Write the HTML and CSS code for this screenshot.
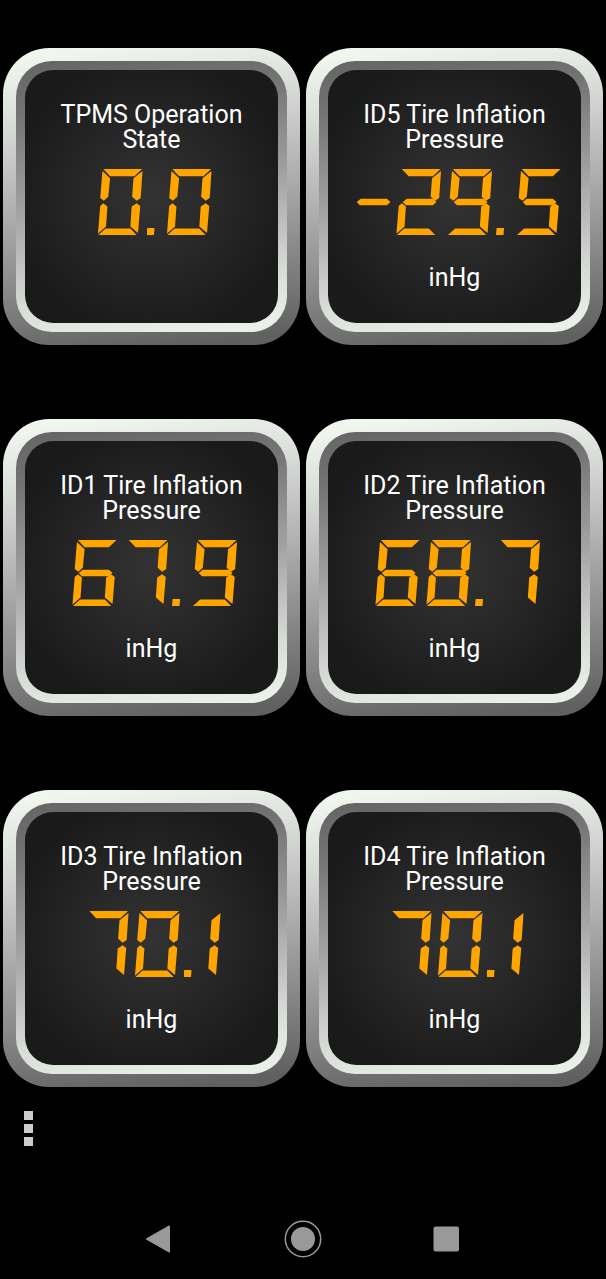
FILE: index.html
```
<!DOCTYPE html>
<html lang="en">
<head>
<meta charset="utf-8">
<meta name="viewport" content="width=device-width, initial-scale=1">
<title>Tire pressure</title>
<link rel="stylesheet" href="styles.css">
</head>
<body>
<main class="dashboard">
  <section class="gauge"><div class="ring"><div class="face">
    <h2 class="title">TPMS Operation State</h2>
    <div class="readout" data-value="0.0"></div>
  </div></div></section>
  <section class="gauge"><div class="ring"><div class="face">
    <h2 class="title">ID5 Tire Inflation Pressure</h2>
    <div class="readout" data-value="-29.5"></div>
    <p class="unit">inHg</p>
  </div></div></section>
  <section class="gauge"><div class="ring"><div class="face">
    <h2 class="title">ID1 Tire Inflation Pressure</h2>
    <div class="readout" data-value="67.9"></div>
    <p class="unit">inHg</p>
  </div></div></section>
  <section class="gauge"><div class="ring"><div class="face">
    <h2 class="title">ID2 Tire Inflation Pressure</h2>
    <div class="readout" data-value="68.7"></div>
    <p class="unit">inHg</p>
  </div></div></section>
  <section class="gauge"><div class="ring"><div class="face">
    <h2 class="title">ID3 Tire Inflation Pressure</h2>
    <div class="readout" data-value="70.1"></div>
    <p class="unit">inHg</p>
  </div></div></section>
  <section class="gauge"><div class="ring"><div class="face">
    <h2 class="title">ID4 Tire Inflation Pressure</h2>
    <div class="readout" data-value="70.1"></div>
    <p class="unit">inHg</p>
  </div></div></section>
</main>
<div class="toolbar">
  <button class="menu" type="button" aria-label="Menu"><span class="dot"></span><span class="dot"></span><span class="dot"></span></button>
</div>
<nav class="navbar" aria-label="System">
  <button class="nav-button" type="button" aria-label="Back">
    <svg width="40" height="40" viewBox="0 0 40 40"><path d="M8 20 30 7.500V32.500Z" fill="#999" stroke="#999" stroke-width="2" stroke-linejoin="round"/></svg>
  </button>
  <button class="nav-button" type="button" aria-label="Home">
    <svg width="40" height="40" viewBox="0 0 40 40"><circle cx="20" cy="20" r="17.700" fill="none" stroke="#999" stroke-width="1.500"/><circle cx="20" cy="20" r="12" fill="#999"/></svg>
  </button>
  <button class="nav-button" type="button" aria-label="Recent apps">
    <svg width="40" height="40" viewBox="0 0 40 40"><rect x="6.500" y="7.500" width="25.500" height="25" rx="2" fill="#999"/></svg>
  </button>
</nav>
<script src="display.js"></script>
</body>
</html>
```
FILE: styles.css
```
* { box-sizing: border-box; }

body {
  margin: 0;
  min-height: 100vh;
  display: flex;
  flex-direction: column;
  background: #000;
  color: #fff;
  font-family: Roboto, "Liberation Sans", sans-serif;
}

button {
  border: 0;
  background: none;
  cursor: pointer;
}

.dashboard {
  display: grid;
  grid-template-columns: 1fr 1fr;
  gap: 74px 6px;
  padding: 48px 3px 0;
}

/* Metal bezel, inner bevel and dark face */
.gauge {
  display: flex;
  aspect-ratio: 1;
  padding: 13px;
  border-radius: 46px;
  background: linear-gradient(172deg, #f0f5ee 4%, #dde1dc 20%, #a6a6a6 54%, #606060 96%);
}

.ring {
  flex: 1;
  display: flex;
  padding: 9px;
  border-radius: 36px;
  background: linear-gradient(172deg, #666 2%, #747474 18%, #a4a4a4 50%, #d8dcd7 80%, #eaf0e9 96%);
}

.face {
  flex: 1;
  display: flex;
  flex-direction: column;
  align-items: center;
  padding-top: 32px;
  border-radius: 28px;
  background: radial-gradient(circle closest-side, #333 0%, #272727 55%, #1a1a1a 110%);
}

.title {
  margin: 0;
  max-width: 200px;
  font-size: 25px;
  font-weight: 400;
  line-height: 25px;
  text-align: center;
}

/* Seven-segment display */
.readout {
  display: flex;
  justify-content: center;
  height: 66px;
  margin-top: 17px;
}

.digit {
  display: grid;
  flex: none;
  grid-template-columns: 45px;
  width: 51px;
  padding-left: 6px;
}

.digit-minus { width: 42px; padding-left: 2px; }
.digit-1 { width: 28px; padding: 0 5px 0 0; justify-content: end; }

.segment {
  grid-area: 1 / 1;
  height: 66px;
  background: #ffa500;
}

.segment-a { clip-path: polygon(13% 0, 99% 0, 82% 11%, 28% 11%); }
.segment-b { clip-path: polygon(100% 3%, 96% 44%, 87% 48%, 77% 42%, 80% 14%); }
.segment-c { clip-path: polygon(87% 52%, 95% 56%, 90% 97%, 73% 87%, 76% 57%); }
.segment-d { clip-path: polygon(18% 90%, 73% 90%, 87% 100%, 2% 100%); }
.segment-e { clip-path: polygon(6% 56%, 13% 52%, 22% 57%, 19% 87%, 1% 98%); }
.segment-f { clip-path: polygon(11% 3%, 28% 14%, 24% 42%, 14% 48%, 6% 44%); }
.segment-g { clip-path: polygon(15% 50%, 24% 45%, 82% 45%, 90% 50%, 82% 55%, 22% 55%); }

.point {
  align-self: flex-end;
  width: 8px;
  height: 7px;
  margin: 0 6px 0 4px;
  background: #ffa500;
  clip-path: polygon(8% 0, 100% 0, 94% 100%, 0 100%);
}

.unit {
  margin: 27px 0 0;
  font-size: 25px;
  line-height: 32px;
}

.toolbar {
  padding: 16px 16px 0;
}

.menu {
  display: flex;
  flex-direction: column;
  gap: 4px;
  padding: 8px;
}

.dot {
  width: 9px;
  height: 9px;
  background: #ccc;
}

.navbar {
  display: flex;
  justify-content: center;
  gap: 104px;
  margin-top: auto;
  padding-bottom: 20px;
}

.nav-button {
  display: flex;
  padding: 0;
}
```
FILE: display.js
```
// Lit segments for each character of a readout
const SEGMENTS = {
  "0": "abcdef", "1": "bc", "2": "abdeg", "3": "abcdg", "4": "bcfg",
  "5": "acdfg", "6": "acdefg", "7": "abc", "8": "abcdefg", "9": "abcdfg",
  "-": "g"
};

for (const readout of document.querySelectorAll(".readout")) {
  readout.setAttribute("role", "img");
  readout.setAttribute("aria-label", readout.dataset.value);
  for (const char of readout.dataset.value) {
    const cell = document.createElement("span");
    if (char === ".") {
      cell.className = "point";
    } else {
      cell.className = "digit digit-" + (char === "-" ? "minus" : char);
      for (const name of SEGMENTS[char]) {
        const segment = document.createElement("span");
        segment.className = "segment segment-" + name;
        cell.append(segment);
      }
    }
    readout.append(cell);
  }
}
```
